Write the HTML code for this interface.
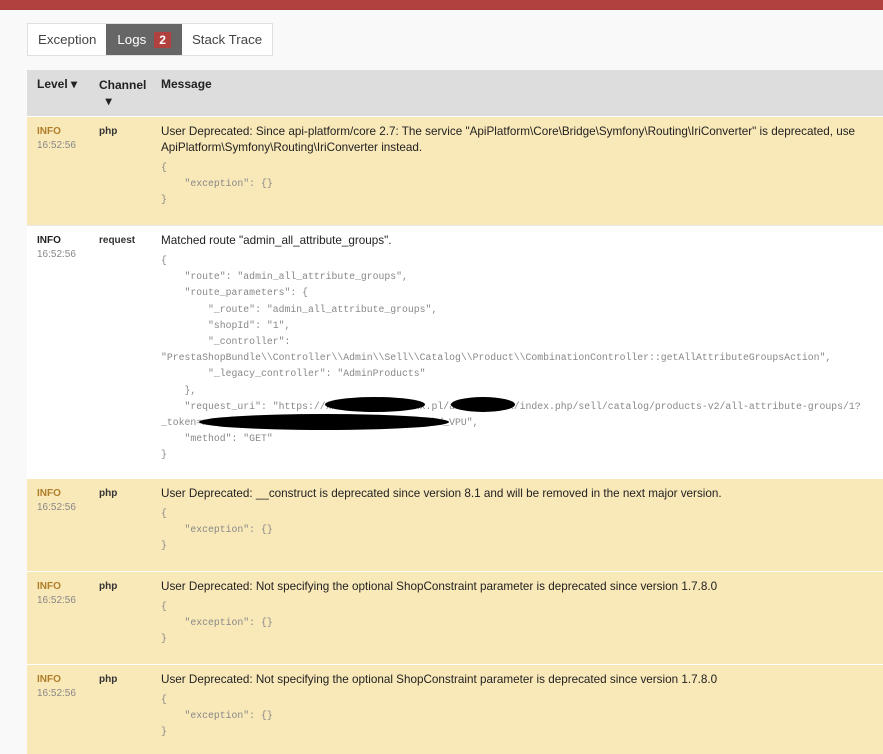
<!DOCTYPE html>
<html><head><style>
body{margin:0;width:883px;height:750px;overflow:hidden;background:#f9f9f9;font-family:"Liberation Sans",sans-serif;position:relative}
.top{position:absolute;left:0;top:0;width:883px;height:10px;background:#b0413e}
.tabs{position:absolute;left:27px;top:23px;height:33px;display:flex;border:1px solid #e0e0e0;background:#fff;box-sizing:border-box}
.tab{padding:0 10px;line-height:31px;font-size:13.3px;color:#444}
.tab.act{background:#666;color:#fff;padding:0 11px}
.badge{display:inline-block;background:#b0413e;color:#fff;font-weight:bold;font-size:12px;line-height:16px;padding:0 5px;margin-left:8px}
.hdr{position:absolute;left:27px;top:70px;width:856px;height:46px;background:#dddddd;font-size:12px;font-weight:bold;color:#222}
.row{position:absolute;left:27px;width:856px;border-top:1px solid #fff;box-sizing:border-box}
.y{background:#f9e8b8}
.w{background:#fff;border-top:1px solid #e8e8e8}
.c{position:absolute;font-size:12px}
.lv{left:10px;font-size:10px;font-weight:bold;line-height:14px}
.y .lv b{color:#b07d2a}
.lv span{font-weight:normal;color:#888;display:block}
.ch{left:72px;font-size:10px;font-weight:bold;color:#333;line-height:14px}
.msg{left:134px;right:6px;line-height:16px;color:#222;font-size:11.7px}
pre{margin:4px 0 0;font-family:"Liberation Mono",monospace;font-size:9.8px;line-height:16.2px;color:#888}
.blob{position:absolute;background:#000;border-radius:50%}
</style></head><body>
<div class="top"></div>
<div class="tabs"><div class="tab">Exception</div><div class="tab act">Logs<span class="badge">2</span></div><div class="tab">Stack Trace</div></div>
<div class="hdr">
<div class="c" style="left:10px;top:7px">Level ▾</div>
<div class="c" style="left:72px;top:7px;line-height:16px">Channel<br>&nbsp;&nbsp;▾</div>
<div class="c" style="left:134px;top:7px">Message</div>
</div>

<div class="row y" style="top:116px;height:110px">
<div class="c lv" style="top:8px"><b>INFO</b><span>16:52:56</span></div>
<div class="c ch" style="top:8px">php</div>
<div class="c msg" style="top:7px">User Deprecated: Since api-platform/core 2.7: The service "ApiPlatform\Core\Bridge\Symfony\Routing\IriConverter" is deprecated, use ApiPlatform\Symfony\Routing\IriConverter instead.
<pre>{
    "exception": {}
}</pre></div>
</div>

<div class="row w" style="top:225px;height:254px">
<div class="c lv" style="top:8px"><b style="color:#222">INFO</b><span>16:52:56</span></div>
<div class="c ch" style="top:8px">request</div>
<div class="c msg" style="top:7px">Matched route "admin_all_attribute_groups".
<pre>{
    "route": "admin_all_attribute_groups",
    "route_parameters": {
        "_route": "admin_all_attribute_groups",
        "shopId": "1",
        "_controller":
"PrestaShopBundle\\Controller\\Admin\\Sell\\Catalog\\Product\\CombinationController::getAllAttributeGroupsAction",
        "_legacy_controller": "AdminProducts"
    },
    "request_uri": "https://xxxxxxxxxxxxxxxxx.pl/axxxxxxxxxx/index.php/sell/catalog/products-v2/all-attribute-groups/1?
_token=xxxxxxxxxxxxxxxxxxxxxxxxxxxxxxxxxxxxxxxbd_VPU",
    "method": "GET"
}</pre></div>
<div class="blob" style="left:298px;top:171px;width:100px;height:15px"></div>
<div class="blob" style="left:424px;top:171px;width:64px;height:15px"></div>
<div class="blob" style="left:172px;top:188px;width:250px;height:16px"></div>
</div>

<div class="row y" style="top:478px;height:94px">
<div class="c lv" style="top:8px"><b>INFO</b><span>16:52:56</span></div>
<div class="c ch" style="top:8px">php</div>
<div class="c msg" style="top:7px">User Deprecated: __construct is deprecated since version 8.1 and will be removed in the next major version.
<pre>{
    "exception": {}
}</pre></div>
</div>

<div class="row y" style="top:571px;height:94px">
<div class="c lv" style="top:8px"><b>INFO</b><span>16:52:56</span></div>
<div class="c ch" style="top:8px">php</div>
<div class="c msg" style="top:7px">User Deprecated: Not specifying the optional ShopConstraint parameter is deprecated since version 1.7.8.0
<pre>{
    "exception": {}
}</pre></div>
</div>

<div class="row y" style="top:664px;height:90px">
<div class="c lv" style="top:8px"><b>INFO</b><span>16:52:56</span></div>
<div class="c ch" style="top:8px">php</div>
<div class="c msg" style="top:7px">User Deprecated: Not specifying the optional ShopConstraint parameter is deprecated since version 1.7.8.0
<pre>{
    "exception": {}
}</pre></div>
</div>
</body></html>
